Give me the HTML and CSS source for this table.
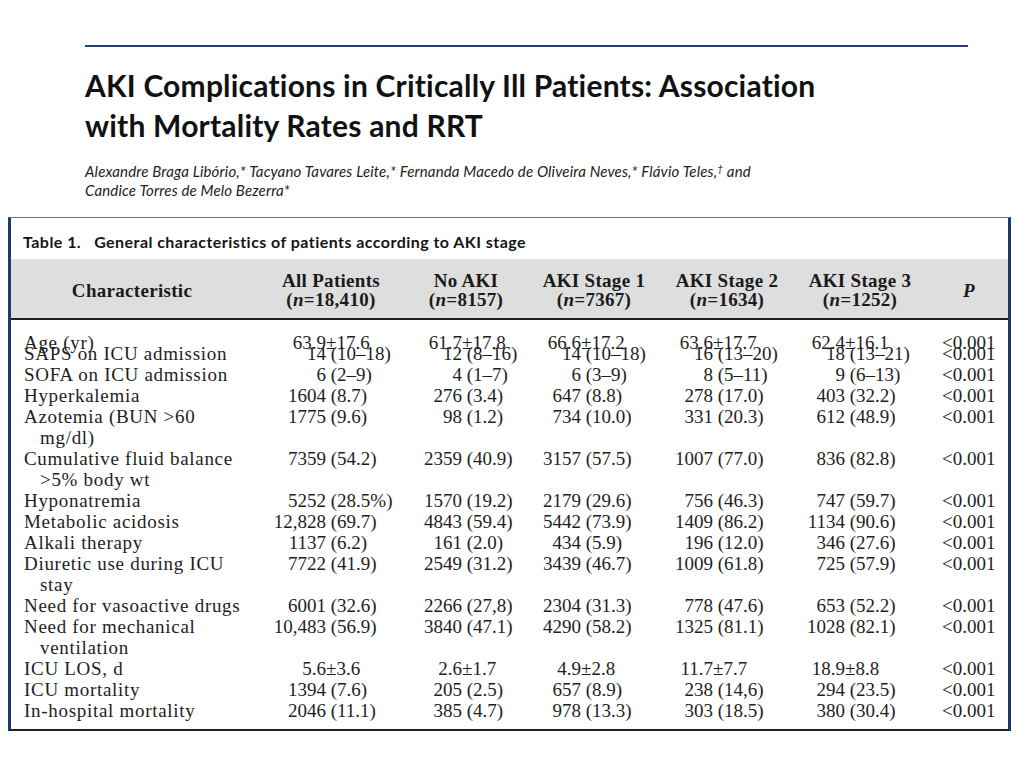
FILE: index.html
```html
<!DOCTYPE html>
<html lang="en">
<head>
<meta charset="utf-8">
<title>AKI Complications in Critically Ill Patients</title>
<link rel="stylesheet" href="styles.css">
</head>
<body>
<header class="article">
  <div class="rule"></div>
  <h1 class="title">AKI Complications in Critically Ill Patients: Association<br>with Mortality Rates and RRT</h1>
  <p class="authors">Alexandre Braga Libório,* Tacyano Tavares Leite,* Fernanda Macedo de Oliveira Neves,* Flávio Teles,<sup>†</sup> and<br>Candice Torres de Melo Bezerra*</p>
</header>

<section class="table-box">
  <div class="caption">Table 1.   General characteristics of patients according to AKI stage</div>
  <div class="thead">
    <div class="th char">Characteristic</div>
    <div class="th">All Patients<br>(<i>n</i>=18,410)</div>
    <div class="th">No AKI<br>(<i>n</i>=8157)</div>
    <div class="th">AKI Stage 1<br>(<i>n</i>=7367)</div>
    <div class="th">AKI Stage 2<br>(<i>n</i>=1634)</div>
    <div class="th">AKI Stage 3<br>(<i>n</i>=1252)</div>
    <div class="th p">P</div>
  </div>
  <div class="tbody">
    <div class="row r-age">
      <div class="lbl">Age (yr)</div>
      <div class="c"><span class="h">63.9</span><span class="t">±17.6</span></div>
      <div class="c"><span class="h">61.7</span><span class="t">±17.8</span></div>
      <div class="c"><span class="h">66.6</span><span class="t">±17.2</span></div>
      <div class="c"><span class="h">63.6</span><span class="t">±17.7</span></div>
      <div class="c"><span class="h">62.4</span><span class="t">±16.1</span></div>
      <div class="c pv">&lt;0.001</div>
    </div>
    <div class="row">
      <div class="lbl">SAPS on ICU admission</div>
      <div class="c"><span class="h">14</span><span class="t"> (10–18)</span></div>
      <div class="c"><span class="h">12</span><span class="t"> (8–16)</span></div>
      <div class="c"><span class="h">14</span><span class="t"> (10–18)</span></div>
      <div class="c"><span class="h">16</span><span class="t"> (13–20)</span></div>
      <div class="c"><span class="h">18</span><span class="t"> (13–21)</span></div>
      <div class="c pv">&lt;0.001</div>
    </div>
    <div class="row">
      <div class="lbl">SOFA on ICU admission</div>
      <div class="c"><span class="h">6</span><span class="t"> (2–9)</span></div>
      <div class="c"><span class="h">4</span><span class="t"> (1–7)</span></div>
      <div class="c"><span class="h">6</span><span class="t"> (3–9)</span></div>
      <div class="c"><span class="h">8</span><span class="t"> (5–11)</span></div>
      <div class="c"><span class="h">9</span><span class="t"> (6–13)</span></div>
      <div class="c pv">&lt;0.001</div>
    </div>
    <div class="row">
      <div class="lbl">Hyperkalemia</div>
      <div class="c"><span class="h">1604</span><span class="t"> (8.7)</span></div>
      <div class="c"><span class="h">276</span><span class="t"> (3.4)</span></div>
      <div class="c"><span class="h">647</span><span class="t"> (8.8)</span></div>
      <div class="c"><span class="h">278</span><span class="t"> (17.0)</span></div>
      <div class="c"><span class="h">403</span><span class="t"> (32.2)</span></div>
      <div class="c pv">&lt;0.001</div>
    </div>
    <div class="row">
      <div class="lbl">Azotemia (BUN &gt;60<span class="l2">mg/dl)</span></div>
      <div class="c"><span class="h">1775</span><span class="t"> (9.6)</span></div>
      <div class="c"><span class="h">98</span><span class="t"> (1.2)</span></div>
      <div class="c"><span class="h">734</span><span class="t"> (10.0)</span></div>
      <div class="c"><span class="h">331</span><span class="t"> (20.3)</span></div>
      <div class="c"><span class="h">612</span><span class="t"> (48.9)</span></div>
      <div class="c pv">&lt;0.001</div>
    </div>
    <div class="row">
      <div class="lbl">Cumulative fluid balance<span class="l2">&gt;5% body wt</span></div>
      <div class="c"><span class="h">7359</span><span class="t"> (54.2)</span></div>
      <div class="c"><span class="h">2359</span><span class="t"> (40.9)</span></div>
      <div class="c"><span class="h">3157</span><span class="t"> (57.5)</span></div>
      <div class="c"><span class="h">1007</span><span class="t"> (77.0)</span></div>
      <div class="c"><span class="h">836</span><span class="t"> (82.8)</span></div>
      <div class="c pv">&lt;0.001</div>
    </div>
    <div class="row">
      <div class="lbl">Hyponatremia</div>
      <div class="c"><span class="h">5252</span><span class="t"> (28.5%)</span></div>
      <div class="c"><span class="h">1570</span><span class="t"> (19.2)</span></div>
      <div class="c"><span class="h">2179</span><span class="t"> (29.6)</span></div>
      <div class="c"><span class="h">756</span><span class="t"> (46.3)</span></div>
      <div class="c"><span class="h">747</span><span class="t"> (59.7)</span></div>
      <div class="c pv">&lt;0.001</div>
    </div>
    <div class="row">
      <div class="lbl">Metabolic acidosis</div>
      <div class="c"><span class="h">12,828</span><span class="t"> (69.7)</span></div>
      <div class="c"><span class="h">4843</span><span class="t"> (59.4)</span></div>
      <div class="c"><span class="h">5442</span><span class="t"> (73.9)</span></div>
      <div class="c"><span class="h">1409</span><span class="t"> (86.2)</span></div>
      <div class="c"><span class="h">1134</span><span class="t"> (90.6)</span></div>
      <div class="c pv">&lt;0.001</div>
    </div>
    <div class="row">
      <div class="lbl">Alkali therapy</div>
      <div class="c"><span class="h">1137</span><span class="t"> (6.2)</span></div>
      <div class="c"><span class="h">161</span><span class="t"> (2.0)</span></div>
      <div class="c"><span class="h">434</span><span class="t"> (5.9)</span></div>
      <div class="c"><span class="h">196</span><span class="t"> (12.0)</span></div>
      <div class="c"><span class="h">346</span><span class="t"> (27.6)</span></div>
      <div class="c pv">&lt;0.001</div>
    </div>
    <div class="row">
      <div class="lbl">Diuretic use during ICU<span class="l2">stay</span></div>
      <div class="c"><span class="h">7722</span><span class="t"> (41.9)</span></div>
      <div class="c"><span class="h">2549</span><span class="t"> (31.2)</span></div>
      <div class="c"><span class="h">3439</span><span class="t"> (46.7)</span></div>
      <div class="c"><span class="h">1009</span><span class="t"> (61.8)</span></div>
      <div class="c"><span class="h">725</span><span class="t"> (57.9)</span></div>
      <div class="c pv">&lt;0.001</div>
    </div>
    <div class="row">
      <div class="lbl">Need for vasoactive drugs</div>
      <div class="c"><span class="h">6001</span><span class="t"> (32.6)</span></div>
      <div class="c"><span class="h">2266</span><span class="t"> (27,8)</span></div>
      <div class="c"><span class="h">2304</span><span class="t"> (31.3)</span></div>
      <div class="c"><span class="h">778</span><span class="t"> (47.6)</span></div>
      <div class="c"><span class="h">653</span><span class="t"> (52.2)</span></div>
      <div class="c pv">&lt;0.001</div>
    </div>
    <div class="row">
      <div class="lbl">Need for mechanical<span class="l2">ventilation</span></div>
      <div class="c"><span class="h">10,483</span><span class="t"> (56.9)</span></div>
      <div class="c"><span class="h">3840</span><span class="t"> (47.1)</span></div>
      <div class="c"><span class="h">4290</span><span class="t"> (58.2)</span></div>
      <div class="c"><span class="h">1325</span><span class="t"> (81.1)</span></div>
      <div class="c"><span class="h">1028</span><span class="t"> (82.1)</span></div>
      <div class="c pv">&lt;0.001</div>
    </div>
    <div class="row">
      <div class="lbl">ICU LOS, d</div>
      <div class="c"><span class="h">5.6</span><span class="t">±3.6</span></div>
      <div class="c"><span class="h">2.6</span><span class="t">±1.7</span></div>
      <div class="c"><span class="h">4.9</span><span class="t">±2.8</span></div>
      <div class="c"><span class="h">11.7</span><span class="t">±7.7</span></div>
      <div class="c"><span class="h">18.9</span><span class="t">±8.8</span></div>
      <div class="c pv">&lt;0.001</div>
    </div>
    <div class="row">
      <div class="lbl">ICU mortality</div>
      <div class="c"><span class="h">1394</span><span class="t"> (7.6)</span></div>
      <div class="c"><span class="h">205</span><span class="t"> (2.5)</span></div>
      <div class="c"><span class="h">657</span><span class="t"> (8.9)</span></div>
      <div class="c"><span class="h">238</span><span class="t"> (14,6)</span></div>
      <div class="c"><span class="h">294</span><span class="t"> (23.5)</span></div>
      <div class="c pv">&lt;0.001</div>
    </div>
    <div class="row">
      <div class="lbl">In-hospital mortality</div>
      <div class="c"><span class="h">2046</span><span class="t"> (11.1)</span></div>
      <div class="c"><span class="h">385</span><span class="t"> (4.7)</span></div>
      <div class="c"><span class="h">978</span><span class="t"> (13.3)</span></div>
      <div class="c"><span class="h">303</span><span class="t"> (18.5)</span></div>
      <div class="c"><span class="h">380</span><span class="t"> (30.4)</span></div>
      <div class="c pv">&lt;0.001</div>
    </div>
  </div>
</section>
</body>
</html>
```
FILE: styles.css
```css
* { box-sizing: border-box; }

body {
  margin: 0;
  background: #ffffff;
  color: #1c1c1c;
  width: 1024px;
}

.article {
  padding: 45px 0 0 85px;
}

.rule {
  width: 883px;
  height: 2px;
  background: #22406f;
}

.title {
  margin: 18px 0 0;
  font-family: Lato, "Open Sans", sans-serif;
  font-weight: 700;
  font-size: 30px;
  line-height: 40px;
  letter-spacing: 0.2px;
  color: #111111;
}

.authors {
  margin: 17px 0 0;
  font-family: Lato, "Open Sans", sans-serif;
  font-style: italic;
  font-size: 15px;
  line-height: 19px;
  letter-spacing: 0.15px;
  color: #222222;
}

.authors sup {
  font-size: 10px;
  line-height: 0;
  vertical-align: 5px;
}

.table-box {
  margin: 17px 0 0 8px;
  width: 1003px;
  border-left: 3px solid #1d3a6a;
  border-right: 3px solid #1d3a6a;
  border-top: 1px solid #5e77a2;
  border-bottom: 2px solid #1c2230;
}

.caption {
  padding: 15px 0 8px 12px;
  font-family: Lato, "Open Sans", sans-serif;
  font-weight: 700;
  font-size: 16px;
  line-height: 18px;
  letter-spacing: 0.45px;
  white-space: pre;
  color: #151515;
}

.thead,
.row {
  display: grid;
  grid-template-columns: 251px 138px 132px 124px 142px 124px 86px;
}

.thead {
  height: 61px;
  background: #dedede;
  border-bottom: 2px solid #1e1e1e;
  font-family: "Liberation Serif", serif;
  font-weight: 700;
  font-size: 19px;
  line-height: 19px;
  letter-spacing: 0.3px;
  color: #1a1a1a;
}

.th {
  padding-top: 12px;
  text-align: center;
  white-space: nowrap;
}

.th.char {
  padding-top: 22px;
  padding-right: 9px;
}

.th.p {
  padding-top: 22px;
  padding-left: 8px;
  font-style: italic;
}

.tbody {
  padding: 12px 0 8px;
  font-family: "Liberation Serif", serif;
  font-size: 19px;
  line-height: 21px;
  color: #1e1e1e;
}

.row.r-age {
  height: 11px;
  overflow: visible;
}

.lbl {
  padding-left: 13px;
  letter-spacing: 0.7px;
  white-space: nowrap;
}

.l2 {
  display: block;
  padding-left: 16px;
}

.c {
  white-space: pre;
}

.h {
  display: inline-block;
  text-align: right;
}

.row > :nth-child(2) .h { width: 64px; }
.row > :nth-child(3) .h { width: 62px; }
.row > :nth-child(4) .h { width: 49px; }
.row > :nth-child(5) .h { width: 57px; }
.row > :nth-child(6) .h { width: 47px; }

.pv {
  padding-left: 20px;
}
```
